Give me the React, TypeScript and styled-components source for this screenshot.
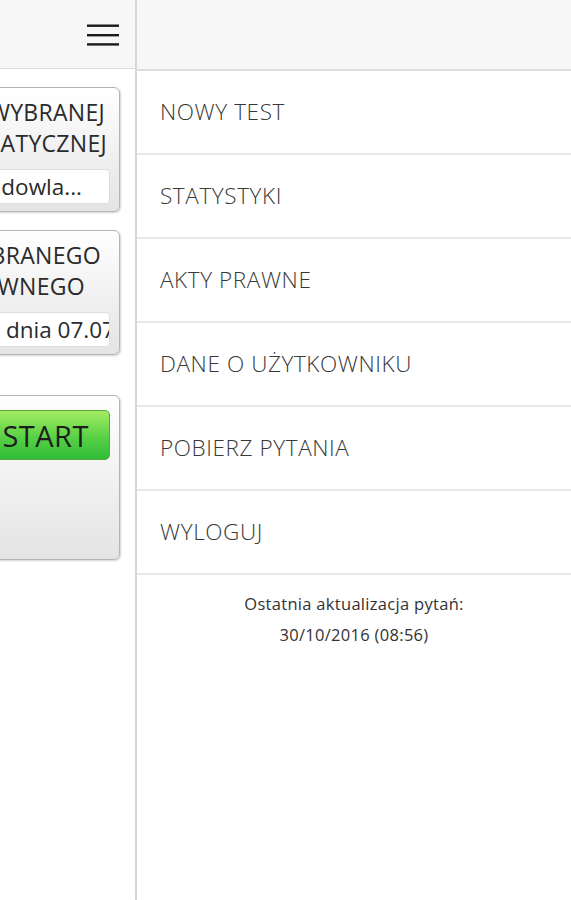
import styled, { createGlobalStyle } from 'styled-components';

const GlobalStyle = createGlobalStyle`
  html, body {
    margin: 0;
    padding: 0;
    background: #fff;
  }
  body {
    font-family: "Open Sans", "Noto Sans", sans-serif;
  }
`;

export default function App() {
  return (
    <>
      <GlobalStyle />
      <PageLayout>
        <LeftPane>
          <LeftHeader>
            <MenuIcon width={32} height={22} viewBox="0 0 32 22">
              <rect x="0" y="0.5" width="32" height="2.4" fill="#1a1a1a" />
              <rect x="0" y="10" width="32" height="2.4" fill="#1a1a1a" />
              <rect x="0" y="19.2" width="32" height="2.4" fill="#1a1a1a" />
            </MenuIcon>
          </LeftHeader>
          <LeftBody>
            <CardColumn>
              <Card>
                <CardLine pad={15}>TEST Z WYBRANEJ</CardLine>
                <CardLine pad={13}>GRUPY TEMATYCZNEJ</CardLine>
                <Field>
                  <FieldText pad={27}>Prawo budowla...</FieldText>
                </Field>
              </Card>
              <Card>
                <CardLine pad={19}>TEST Z WYBRANEGO</CardLine>
                <CardLine pad={35}>AKTU PRAWNEGO</CardLine>
                <Field>
                  <FieldText pad={-6}>Ustawa z dnia 07.07</FieldText>
                </Field>
              </Card>
              <StartCard>
                <StartButton>START</StartButton>
              </StartCard>
            </CardColumn>
          </LeftBody>
        </LeftPane>
        <Separator />
        <Drawer>
          <DrawerHeader />
          <MenuItem>NOWY TEST</MenuItem>
          <MenuItem>STATYSTYKI</MenuItem>
          <MenuItem>AKTY PRAWNE</MenuItem>
          <MenuItem>DANE O UŻYTKOWNIKU</MenuItem>
          <MenuItem>POBIERZ PYTANIA</MenuItem>
          <MenuItem>WYLOGUJ</MenuItem>
          <Footer>
            <div>Ostatnia aktualizacja pytań:</div>
            <div>30/10/2016 (08:56)</div>
          </Footer>
        </Drawer>
      </PageLayout>
    </>
  );
}

const PageLayout = styled.div`
  display: flex;
  flex-direction: row;
  width: 571px;
  height: 900px;
  overflow: hidden;
  background: #fff;
`;

const LeftPane = styled.div`
  display: flex;
  flex-direction: column;
  width: 135px;
  flex-shrink: 0;
  overflow: hidden;
`;

const LeftHeader = styled.div`
  display: flex;
  flex-direction: row;
  align-items: center;
  justify-content: flex-end;
  height: 69px;
  padding-right: 16px;
  background: #f7f7f7;
  border-bottom: 1px solid #dcdcdc;
  box-sizing: border-box;
  flex-shrink: 0;
`;

const MenuIcon = styled.svg`
  display: block;
  margin-top: 2px;
`;

const LeftBody = styled.div`
  display: flex;
  flex-direction: row;
  justify-content: flex-end;
  padding-right: 15px;
  padding-top: 18px;
`;

const CardColumn = styled.div`
  display: flex;
  flex-direction: column;
  gap: 18px;
  width: 420px;
  flex-shrink: 0;
`;

const Card = styled.div`
  display: flex;
  flex-direction: column;
  height: 125px;
  padding: 9px 9px 0 0;
  box-sizing: border-box;
  border: 1px solid #b4b4b4;
  border-radius: 6px;
  background: linear-gradient(#ffffff, #e4e4e4);
  box-shadow: 1px 1px 2px rgba(0, 0, 0, 0.18);
  color: #2a2a2a;
  font-size: 23px;
`;

const CardLine = styled.div<{ pad: number }>`
  height: 31px;
  line-height: 31px;
  text-align: right;
  white-space: nowrap;
  letter-spacing: 0.3px;
  padding-right: ${({ pad }) => pad - 10}px;
`;

const Field = styled.div`
  display: flex;
  flex-direction: row;
  justify-content: flex-end;
  align-items: center;
  height: 35px;
  margin-top: 10px;
  overflow: hidden;
  background: #fff;
  border: 1px solid #dedede;
  border-radius: 4px;
  box-sizing: border-box;
`;

const FieldText = styled.span<{ pad: number }>`
  white-space: nowrap;
  font-size: 22.5px;
  color: #2a2a2a;
  margin-right: ${({ pad }) => pad}px;
`;

const StartCard = styled(Card)`
  height: 165px;
  margin-top: 22px;
  padding-top: 14px;
`;

const StartButton = styled.div`
  display: flex;
  align-items: center;
  justify-content: flex-end;
  height: 50px;
  padding-right: 20px;
  box-sizing: border-box;
  border: 1px solid #52a93a;
  border-radius: 5px;
  background: linear-gradient(#a4ec62, #58d046 55%, #2fbd38);
  font-size: 29px;
  letter-spacing: 0.5px;
  color: #1d1d1d;
`;

const Separator = styled.div`
  width: 2px;
  flex-shrink: 0;
  background: #d6d6d6;
  box-shadow: 1px 0 2px rgba(0, 0, 0, 0.08);
`;

const Drawer = styled.div`
  display: flex;
  flex-direction: column;
  flex: 1;
  background: #fff;
`;

const DrawerHeader = styled.div`
  height: 71px;
  flex-shrink: 0;
  background: #f7f7f7;
  border-bottom: 2px solid #dddddd;
  box-sizing: border-box;
`;

const MenuItem = styled.div`
  display: flex;
  align-items: center;
  height: 84px;
  flex-shrink: 0;
  padding-left: 23px;
  padding-bottom: 1px;
  box-sizing: border-box;
  border-bottom: 2px solid #e8e8e8;
  font-size: 22.5px;
  font-weight: 300;
  letter-spacing: 0.6px;
  color: #383838;
`;

const Footer = styled.div`
  display: flex;
  flex-direction: column;
  align-items: center;
  padding-top: 13px;
  font-size: 16.5px;
  letter-spacing: 0.3px;
  line-height: 31px;
  color: #333;
`;
